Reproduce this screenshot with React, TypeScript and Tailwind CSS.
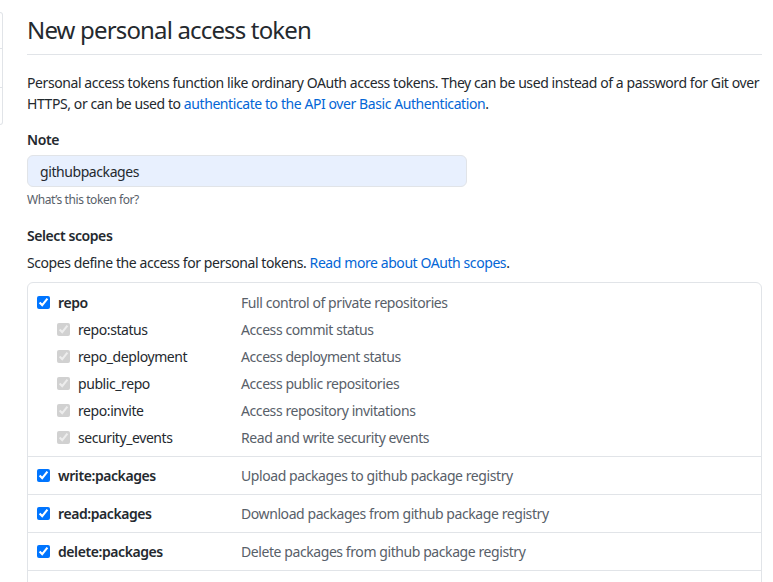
import React from "react";

const font = { fontFamily: '"Segoe UI", "Noto Sans", sans-serif' };

type Sub = { name: string; desc: string };

const repoSubs: Sub[] = [
  { name: "repo:status", desc: "Access commit status" },
  { name: "repo_deployment", desc: "Access deployment status" },
  { name: "public_repo", desc: "Access public repositories" },
  { name: "repo:invite", desc: "Access repository invitations" },
  { name: "security_events", desc: "Read and write security events" },
];

const packageScopes: Sub[] = [
  { name: "write:packages", desc: "Upload packages to github package registry" },
  { name: "read:packages", desc: "Download packages from github package registry" },
  { name: "delete:packages", desc: "Delete packages from github package registry" },
];

function Check({ disabled }: { disabled?: boolean }) {
  return (
    <input
      type="checkbox"
      defaultChecked
      disabled={disabled}
      className="m-0 h-[13px] w-[13px] shrink-0"
    />
  );
}

export default function App() {
  return (
    <div
      className="flex h-screen overflow-hidden bg-white text-[14px] tracking-[-0.03em] text-[#24292e]"
      style={font}
    >
      {/* settings menu edge */}
      <div className="mt-[12px] flex h-[113px] w-[3px] shrink-0 flex-col self-start rounded-r-[6px] border border-l-0 border-[#e1e4e8]">
        <div className="h-[36px] border-b border-[#e1e4e8]" />
        <div className="h-[39px] border-b border-[#e1e4e8]" />
        <div className="flex-1" />
      </div>

      <main className="ml-[24px] w-[735px] shrink-0">
        <div className="mt-[15px] border-b border-[#e1e4e8] pb-[9px]">
          <h1 className="text-[24px] font-normal leading-[30px] tracking-[-0.035em]">
            New personal access token
          </h1>
        </div>

        <p className="mt-[17px] leading-[21px]">
          Personal access tokens function like ordinary OAuth access tokens. They can be used
          instead of a password for Git over HTTPS, or can be used to{" "}
          <a className="text-[#0366d6]">authenticate to the API over Basic Authentication</a>.
        </p>

        <div className="mt-[15px] font-semibold leading-[21px]">Note</div>
        <div className="mt-[5px] flex h-[32px] w-[440px] items-center rounded-[6px] border border-[#e1e4e8] bg-[#e8f0fe] px-[12px]">
          githubpackages
        </div>
        <div className="mt-[4px] text-[12px] leading-[18px] text-[#586069]">
          What’s this token for?
        </div>

        <div className="mt-[16px] font-semibold leading-[21px]">Select scopes</div>
        <p className="mt-[6px] leading-[21px]">
          Scopes define the access for personal tokens.{" "}
          <a className="text-[#0366d6]">Read more about OAuth scopes</a>.
        </p>

        <div className="mt-[9px] rounded-[6px] border border-[#e1e4e8]">
          <div className="pb-[8px] pt-[9px]">
            <div className="flex h-[21px] items-center pl-[9px]">
              <div className="flex w-[204px] items-center gap-[8px]">
                <Check />
                <span className="font-semibold">repo</span>
              </div>
              <span className="text-[#586069]">Full control of private repositories</span>
            </div>
            {repoSubs.map((s) => (
              <div key={s.name} className="mt-[6px] flex h-[21px] items-center pl-[29px]">
                <div className="flex w-[184px] items-center gap-[8px]">
                  <Check disabled />
                  <span>{s.name}</span>
                </div>
                <span className="text-[#586069]">{s.desc}</span>
              </div>
            ))}
          </div>
          {packageScopes.map((s) => (
            <div
              key={s.name}
              className="flex h-[38px] items-center border-t border-[#e1e4e8] pl-[9px]"
            >
              <div className="flex w-[204px] items-center gap-[8px]">
                <Check />
                <span className="font-semibold">{s.name}</span>
              </div>
              <span className="text-[#586069]">{s.desc}</span>
            </div>
          ))}
          {/* next scope group continues below the fold */}
          <div className="h-[38px] border-t border-[#e1e4e8]" />
        </div>
      </main>
    </div>
  );
}
